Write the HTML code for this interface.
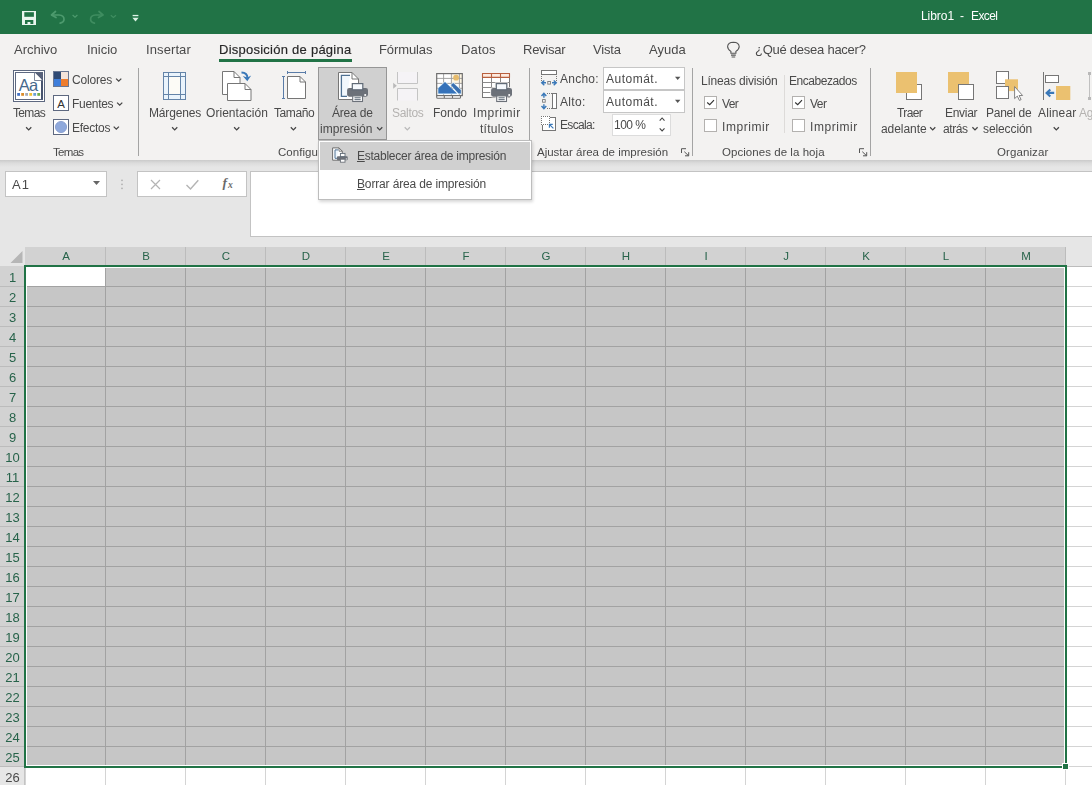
<!DOCTYPE html>
<html lang="es"><head><meta charset="utf-8"><title>Libro1 - Excel</title>
<style>
html,body{margin:0;padding:0;}
body{width:1092px;height:785px;overflow:hidden;position:relative;background:#fff;font-family:"Liberation Sans",sans-serif;}
.a{position:absolute;}
.t{position:absolute;line-height:1;white-space:pre;will-change:transform;}
#titlebar{left:0;top:0;width:1092px;height:34px;background:#217346;}
#ribbon{left:0;top:34px;width:1092px;height:126px;background:#f3f2f1;}
#fbar{left:0;top:160px;width:1092px;height:87px;background:#e6e6e6;}
#fshadow{left:0;top:160px;width:1092px;height:7px;background:linear-gradient(#cacaca,#dcdcdc 45%,#e6e6e6);}
.sep{position:absolute;width:1px;background:#a4a4a4;top:68px;height:88px;}
.box{position:absolute;background:#fff;border:1px solid #c6c6c6;box-sizing:border-box;}
.cb{position:absolute;width:13px;height:13px;background:#fff;border:1px solid #b3b1af;box-sizing:border-box;}
#tabline{left:219px;top:59px;width:133px;height:3px;background:#217346;}
#areabtn{left:318px;top:67px;width:69px;height:73px;background:#d0d0d0;border:1px solid #969696;box-sizing:border-box;}
#menu{left:318px;top:140px;width:214px;height:60px;background:#fff;border:1px solid #bdbdbd;box-sizing:border-box;box-shadow:1px 2px 3px rgba(0,0,0,.16);}
#menuhi{left:320px;top:142px;width:210px;height:28px;background:#d0d0d0;}
u{text-decoration:underline;text-underline-offset:1px;}
</style></head>
<body>
<div class="a" id="titlebar"></div>
<div class="a" id="ribbon"></div>
<div class="a" id="fbar"></div>
<div class="a" id="fshadow"></div>
<div class="a" id="tabline"></div>
<div class="sep" style="left:138px"></div>
<div class="sep" style="left:529px"></div>
<div class="sep" style="left:692px"></div>
<div class="sep" style="left:870px"></div>
<div class="sep" style="left:784px;top:75px;height:58px;background:#dddbd9"></div>
<div class="a" id="areabtn"></div>
<div class="box" style="left:603px;top:67px;width:82px;height:23px"></div>
<div class="box" style="left:603px;top:90px;width:82px;height:23px"></div>
<div class="box" style="left:612px;top:114px;width:59px;height:22px;border-color:#dcdcdc"></div>
<div class="cb" style="left:704px;top:96px"></div>
<div class="cb" style="left:704px;top:119px"></div>
<div class="cb" style="left:792px;top:96px"></div>
<div class="cb" style="left:792px;top:119px"></div>
<div class="box" style="left:5px;top:171px;width:102px;height:26px;border-color:#c3c3c3"></div>
<div class="box" style="left:137px;top:171px;width:110px;height:26px;border-color:#c3c3c3"></div>
<div class="box" style="left:250px;top:171px;width:850px;height:66px;border-color:#c3c3c3"></div>

<svg class="a" style="left:0;top:0" width="1092" height="785" viewBox="0 0 1092 785" shape-rendering="crispEdges"><rect x="0" y="247" width="1092" height="19" fill="#e6e6e6"/><rect x="25" y="247" width="1041" height="18" fill="#d2d2d2"/><rect x="0" y="266" width="25" height="501" fill="#d2d2d2"/><rect x="0" y="767" width="25" height="18" fill="#e6e6e6"/><path d="M22.5 251 V263 H10.5 Z" fill="#b6b6b6" shape-rendering="geometricPrecision"/><rect x="105" y="247" width="1" height="18" fill="#bcbcbc"/><rect x="185" y="247" width="1" height="18" fill="#bcbcbc"/><rect x="265" y="247" width="1" height="18" fill="#bcbcbc"/><rect x="345" y="247" width="1" height="18" fill="#bcbcbc"/><rect x="425" y="247" width="1" height="18" fill="#bcbcbc"/><rect x="505" y="247" width="1" height="18" fill="#bcbcbc"/><rect x="585" y="247" width="1" height="18" fill="#bcbcbc"/><rect x="665" y="247" width="1" height="18" fill="#bcbcbc"/><rect x="745" y="247" width="1" height="18" fill="#bcbcbc"/><rect x="825" y="247" width="1" height="18" fill="#bcbcbc"/><rect x="905" y="247" width="1" height="18" fill="#bcbcbc"/><rect x="985" y="247" width="1" height="18" fill="#bcbcbc"/><rect x="1065" y="247" width="1" height="18" fill="#bcbcbc"/><rect x="1066" y="266" width="26" height="1" fill="#bcbcbc"/><rect x="0" y="286" width="24" height="1" fill="#bcbcbc"/><rect x="0" y="306" width="24" height="1" fill="#bcbcbc"/><rect x="0" y="326" width="24" height="1" fill="#bcbcbc"/><rect x="0" y="346" width="24" height="1" fill="#bcbcbc"/><rect x="0" y="366" width="24" height="1" fill="#bcbcbc"/><rect x="0" y="386" width="24" height="1" fill="#bcbcbc"/><rect x="0" y="406" width="24" height="1" fill="#bcbcbc"/><rect x="0" y="426" width="24" height="1" fill="#bcbcbc"/><rect x="0" y="446" width="24" height="1" fill="#bcbcbc"/><rect x="0" y="466" width="24" height="1" fill="#bcbcbc"/><rect x="0" y="486" width="24" height="1" fill="#bcbcbc"/><rect x="0" y="506" width="24" height="1" fill="#bcbcbc"/><rect x="0" y="526" width="24" height="1" fill="#bcbcbc"/><rect x="0" y="546" width="24" height="1" fill="#bcbcbc"/><rect x="0" y="566" width="24" height="1" fill="#bcbcbc"/><rect x="0" y="586" width="24" height="1" fill="#bcbcbc"/><rect x="0" y="606" width="24" height="1" fill="#bcbcbc"/><rect x="0" y="626" width="24" height="1" fill="#bcbcbc"/><rect x="0" y="646" width="24" height="1" fill="#bcbcbc"/><rect x="0" y="666" width="24" height="1" fill="#bcbcbc"/><rect x="0" y="686" width="24" height="1" fill="#bcbcbc"/><rect x="0" y="706" width="24" height="1" fill="#bcbcbc"/><rect x="0" y="726" width="24" height="1" fill="#bcbcbc"/><rect x="0" y="746" width="24" height="1" fill="#bcbcbc"/><rect x="0" y="766" width="24" height="1" fill="#bcbcbc"/><rect x="0" y="766" width="25" height="1" fill="#bcbcbc"/><rect x="24" y="767" width="1" height="18" fill="#c4c4c4"/><rect x="1067" y="286" width="25" height="1" fill="#d4d4d4"/><rect x="1067" y="306" width="25" height="1" fill="#d4d4d4"/><rect x="1067" y="326" width="25" height="1" fill="#d4d4d4"/><rect x="1067" y="346" width="25" height="1" fill="#d4d4d4"/><rect x="1067" y="366" width="25" height="1" fill="#d4d4d4"/><rect x="1067" y="386" width="25" height="1" fill="#d4d4d4"/><rect x="1067" y="406" width="25" height="1" fill="#d4d4d4"/><rect x="1067" y="426" width="25" height="1" fill="#d4d4d4"/><rect x="1067" y="446" width="25" height="1" fill="#d4d4d4"/><rect x="1067" y="466" width="25" height="1" fill="#d4d4d4"/><rect x="1067" y="486" width="25" height="1" fill="#d4d4d4"/><rect x="1067" y="506" width="25" height="1" fill="#d4d4d4"/><rect x="1067" y="526" width="25" height="1" fill="#d4d4d4"/><rect x="1067" y="546" width="25" height="1" fill="#d4d4d4"/><rect x="1067" y="566" width="25" height="1" fill="#d4d4d4"/><rect x="1067" y="586" width="25" height="1" fill="#d4d4d4"/><rect x="1067" y="606" width="25" height="1" fill="#d4d4d4"/><rect x="1067" y="626" width="25" height="1" fill="#d4d4d4"/><rect x="1067" y="646" width="25" height="1" fill="#d4d4d4"/><rect x="1067" y="666" width="25" height="1" fill="#d4d4d4"/><rect x="1067" y="686" width="25" height="1" fill="#d4d4d4"/><rect x="1067" y="706" width="25" height="1" fill="#d4d4d4"/><rect x="1067" y="726" width="25" height="1" fill="#d4d4d4"/><rect x="1067" y="746" width="25" height="1" fill="#d4d4d4"/><rect x="1067" y="766" width="25" height="1" fill="#d4d4d4"/><rect x="25" y="768" width="1" height="17" fill="#d4d4d4"/><rect x="105" y="768" width="1" height="17" fill="#d4d4d4"/><rect x="185" y="768" width="1" height="17" fill="#d4d4d4"/><rect x="265" y="768" width="1" height="17" fill="#d4d4d4"/><rect x="345" y="768" width="1" height="17" fill="#d4d4d4"/><rect x="425" y="768" width="1" height="17" fill="#d4d4d4"/><rect x="505" y="768" width="1" height="17" fill="#d4d4d4"/><rect x="585" y="768" width="1" height="17" fill="#d4d4d4"/><rect x="665" y="768" width="1" height="17" fill="#d4d4d4"/><rect x="745" y="768" width="1" height="17" fill="#d4d4d4"/><rect x="825" y="768" width="1" height="17" fill="#d4d4d4"/><rect x="905" y="768" width="1" height="17" fill="#d4d4d4"/><rect x="985" y="768" width="1" height="17" fill="#d4d4d4"/><rect x="1065" y="768" width="1" height="17" fill="#d4d4d4"/><rect x="27" y="268" width="1037" height="497" fill="#c6c6c6"/><rect x="27" y="268" width="78" height="18" fill="#ffffff"/><rect x="105" y="268" width="1" height="497" fill="#a2a2a2"/><rect x="185" y="268" width="1" height="497" fill="#a2a2a2"/><rect x="265" y="268" width="1" height="497" fill="#a2a2a2"/><rect x="345" y="268" width="1" height="497" fill="#a2a2a2"/><rect x="425" y="268" width="1" height="497" fill="#a2a2a2"/><rect x="505" y="268" width="1" height="497" fill="#a2a2a2"/><rect x="585" y="268" width="1" height="497" fill="#a2a2a2"/><rect x="665" y="268" width="1" height="497" fill="#a2a2a2"/><rect x="745" y="268" width="1" height="497" fill="#a2a2a2"/><rect x="825" y="268" width="1" height="497" fill="#a2a2a2"/><rect x="905" y="268" width="1" height="497" fill="#a2a2a2"/><rect x="985" y="268" width="1" height="497" fill="#a2a2a2"/><rect x="27" y="286" width="1037" height="1" fill="#a2a2a2"/><rect x="27" y="306" width="1037" height="1" fill="#a2a2a2"/><rect x="27" y="326" width="1037" height="1" fill="#a2a2a2"/><rect x="27" y="346" width="1037" height="1" fill="#a2a2a2"/><rect x="27" y="366" width="1037" height="1" fill="#a2a2a2"/><rect x="27" y="386" width="1037" height="1" fill="#a2a2a2"/><rect x="27" y="406" width="1037" height="1" fill="#a2a2a2"/><rect x="27" y="426" width="1037" height="1" fill="#a2a2a2"/><rect x="27" y="446" width="1037" height="1" fill="#a2a2a2"/><rect x="27" y="466" width="1037" height="1" fill="#a2a2a2"/><rect x="27" y="486" width="1037" height="1" fill="#a2a2a2"/><rect x="27" y="506" width="1037" height="1" fill="#a2a2a2"/><rect x="27" y="526" width="1037" height="1" fill="#a2a2a2"/><rect x="27" y="546" width="1037" height="1" fill="#a2a2a2"/><rect x="27" y="566" width="1037" height="1" fill="#a2a2a2"/><rect x="27" y="586" width="1037" height="1" fill="#a2a2a2"/><rect x="27" y="606" width="1037" height="1" fill="#a2a2a2"/><rect x="27" y="626" width="1037" height="1" fill="#a2a2a2"/><rect x="27" y="646" width="1037" height="1" fill="#a2a2a2"/><rect x="27" y="666" width="1037" height="1" fill="#a2a2a2"/><rect x="27" y="686" width="1037" height="1" fill="#a2a2a2"/><rect x="27" y="706" width="1037" height="1" fill="#a2a2a2"/><rect x="27" y="726" width="1037" height="1" fill="#a2a2a2"/><rect x="27" y="746" width="1037" height="1" fill="#a2a2a2"/><rect x="26" y="267" width="1039" height="1" fill="#fff"/><rect x="26" y="267" width="1" height="499" fill="#fff"/><rect x="1064" y="267" width="1" height="499" fill="#fff"/><rect x="26" y="765" width="1039" height="1" fill="#fff"/><rect x="24" y="265" width="1043" height="2" fill="#217346"/><rect x="24" y="265" width="2" height="503" fill="#217346"/><rect x="1065" y="265" width="2" height="500" fill="#217346"/><rect x="24" y="766" width="1040" height="2" fill="#217346"/><rect x="1062" y="763" width="7" height="7" fill="#fff"/><rect x="1063" y="764" width="5" height="5" fill="#217346"/></svg>
<svg class="a" style="left:0;top:0" width="1092" height="785" viewBox="0 0 1092 785" font-family="Liberation Sans, sans-serif">
<defs>
<g id="printer">
 <path d="M2 4.9 H18.8 Q20.9 4.9 20.9 7 V11.6 Q20.9 13.7 18.8 13.7 H2.1 Q0 13.7 0 11.6 V7 Q0 4.9 2 4.9Z" fill="#6c7179"/>
 <rect x="5.2" y="0.6" width="10.5" height="6.2" fill="#f5f9fd" stroke="#5f6a76" stroke-width="1.2"/>
 <rect x="5.6" y="12.9" width="9.8" height="5.6" fill="#fff" stroke="#6c7179" stroke-width="1.1"/>
 <path d="M7.4 14.8 H13.6 M7.4 16.7 H13.6" stroke="#54616e" stroke-width="1"/>
 <circle cx="18.1" cy="12" r="1.05" fill="#fff"/>
</g>
<path id="car" d="M0 0 L2.6 2.6 L5.2 0" fill="none" stroke="#444" stroke-width="1.25"/>
</defs>
<!-- QAT -->
<g id="qat">
 <rect x="22" y="11" width="14" height="14" fill="#e9f6ee"/>
 <rect x="24.3" y="12.2" width="9.6" height="4.6" fill="#217346"/>
 <path d="M25 20 H33.3 V24 H30.4 V22 H27.5 V24 H25Z" fill="#217346"/>
 <g fill="none" stroke="#4d9a6e" stroke-width="1.7" stroke-linecap="round" stroke-linejoin="round">
  <path d="M55.5 11.5 L51.5 15 L56 17.5"/><path d="M52 15 H59 Q64 15.3 64 19.3 Q64 22.3 60.2 23.2"/>
 </g>
 <path d="M72.6 15 L75 17.2 L77.4 15" fill="none" stroke="#4d9a6e" stroke-width="1.2"/>
 <g fill="none" stroke="#3f8d60" stroke-width="1.7" stroke-linecap="round" stroke-linejoin="round">
  <path d="M99 11.5 L103 15 L98.5 17.5"/><path d="M102.5 15 H95.5 Q90.6 15.3 90.6 19.3 Q90.6 22.3 94.4 23.2"/>
 </g>
 <path d="M110.8 15.2 L113.4 17.5 L116 15.2" fill="none" stroke="#3f8d60" stroke-width="1.2"/>
 <rect x="132.6" y="14.9" width="5.8" height="1.3" fill="#dcf3e5"/>
 <path d="M132.4 17.8 H138.6 L135.5 21.4Z" fill="#dcf3e5"/>
</g>
<!-- bulb -->
<g fill="none" stroke="#555" stroke-width="1.1">
 <path d="M730.9 53.2 V51.4 Q727.6 49.2 727.6 46.5 Q727.9 42.3 733.4 42.2 Q738.9 42.3 739.2 46.5 Q739.2 49.2 735.9 51.4 V53.2 Z"/>
 <path d="M731 55.1 H735.8 M731.6 57 H735.2"/>
</g>
<!-- Temas big -->
<g id="i-temas">
 <rect x="13.5" y="70.5" width="31" height="31" fill="#fff" stroke="#5d6880"/>
 <rect x="15.5" y="72.5" width="27" height="27" fill="#fff" stroke="#5d6880"/>
 <path d="M41 73 V99.5 H43 V73Z" fill="#47536e"/>
 <path d="M34.5 72.5 H43 V81Z" fill="#566079"/>
 <path d="M34.5 72.5 V80.5 H42.5" fill="#fff" stroke="#5d6880" stroke-width="0.8"/>
 <text x="18.8" y="90.8" font-size="16.5" fill="#46688c" letter-spacing="-0.8">Aa</text>
 <rect x="17.2" y="93" width="2.8" height="2.8" fill="#4472c4"/><rect x="21.2" y="93" width="2.8" height="2.8" fill="#d98c2b"/>
 <rect x="25.2" y="93" width="2.8" height="2.8" fill="#a3abba"/><rect x="29.3" y="93" width="2.8" height="2.8" fill="#f0c232"/>
 <rect x="33.3" y="93" width="2.8" height="2.8" fill="#6a9fd2"/><rect x="37.3" y="93" width="2.8" height="2.8" fill="#70ad47"/>
</g>
<use href="#car" x="26.1" y="127.3"/>
<!-- Colores / Fuentes / Efectos -->
<rect x="53.5" y="71.5" width="15" height="15" fill="#fff" stroke="#6b7893"/>
<rect x="54" y="72" width="7" height="7" fill="#2f4a74"/><rect x="61" y="72" width="7" height="7" fill="#f4e4db"/>
<rect x="54" y="79" width="7" height="7" fill="#3e7edb"/><rect x="61" y="79" width="7" height="7" fill="#ee7d2f"/>
<use href="#car" x="116.1" y="78.6"/>
<rect x="53.5" y="95.5" width="15" height="15" fill="#fff" stroke="#5d6880"/>
<text x="57.2" y="107.7" font-size="11.5" fill="#333">A</text>
<use href="#car" x="117.1" y="102.6"/>
<rect x="53.5" y="119.5" width="15" height="15" fill="#fff" stroke="#5d6880"/>
<circle cx="61" cy="127" r="5.6" fill="#8fa9dc" stroke="#7f97cc" stroke-width="0.8"/>
<use href="#car" x="113.7" y="126.6"/>
<!-- Margenes -->
<rect x="163.5" y="72.5" width="22" height="27" fill="#eaf4fc" stroke="#6484a8"/>
<rect x="169" y="77" width="11" height="17" fill="#fcfbf6"/>
<path d="M168.5 72.5 V99.5 M180.5 72.5 V99.5 M163.5 76.5 H185.5 M163.5 94.5 H185.5" stroke="#6484a8" fill="none"/>
<use href="#car" x="172.1" y="127.3"/>
<!-- Orientacion -->
<path d="M222.5 71.5 H234 L240 77.5 V94.5 H222.5Z" fill="#fff" stroke="#767676"/>
<path d="M234 71.5 V77.5 H240" fill="none" stroke="#767676"/>
<path d="M227.5 83.5 H245 L251 89.5 V100.5 H227.5Z" fill="#fff" stroke="#767676"/>
<path d="M245 83.5 V89.5 H251" fill="none" stroke="#767676"/>
<path d="M241.5 72.6 Q247.4 72.8 247.4 78" fill="none" stroke="#3a78b8" stroke-width="2"/>
<path d="M242.8 76 L247.3 81.2 L251.2 75.6 L247.3 77.6Z" fill="#3a78b8"/>
<use href="#car" x="234.1" y="127.3"/>
<!-- Tamaño -->
<path d="M287.5 76.5 H300 L305.5 82 V98.5 H287.5Z" fill="#fff" stroke="#767676"/>
<path d="M300 76.5 V82 H305.5" fill="none" stroke="#767676"/>
<path d="M287.5 72.5 H305.5 M287.5 71 V74 M305.5 71 V74 M283.5 76.5 V98.5 M282 76.5 H285 M282 98.5 H285" stroke="#5a7ca8" fill="none"/>
<use href="#car" x="290.8" y="127.3"/>
<!-- Area de impresion -->
<path d="M338.5 72.5 H352 L358.5 79 V99.5 H338.5Z" fill="#fff" stroke="#767676"/>
<path d="M352 72.5 V79 H358.5" fill="none" stroke="#767676"/>
<path d="M350 75.3 H341.4 V96.4 H347" fill="#f1f7fc" stroke="#4f7192" stroke-width="1.3"/>
<use href="#printer" x="347.1" y="83"/>
<use href="#car" x="377.1" y="127.3"/>
<!-- Saltos (disabled) -->
<path d="M393.2 82.8 L396.8 85.8 L393.2 88.8Z" fill="#b9b9b9"/>
<path d="M397.5 72 V83.5 H417.5 V72" fill="#f5f3f6" stroke="#c4c4c4"/>
<path d="M397.5 100.5 V88.5 H417.5 V100.5" fill="#f5f3f6" stroke="#c4c4c4"/>
<path d="M404.7 127.3 L407.3 129.9 L409.9 127.3" fill="none" stroke="#b9b9b9" stroke-width="1.25"/>
<!-- Fondo -->
<rect x="436.7" y="73.6" width="25.6" height="22" fill="#fff"/>
<rect x="451.5" y="74" width="10.5" height="9.5" fill="#fdf6e3"/>
<path d="M436.7 78.4 H462.3 M436.7 83.4 H462.3 M436.7 88.3 H462.3 M443.6 73.6 V95.5 M451.4 73.6 V95.5 M459.4 73.6 V95.5" stroke="#9a9a9a" fill="none" stroke-width="0.9"/>
<circle cx="456.1" cy="77.7" r="2.9" fill="#e6bb6c"/>
<path d="M437.7 94.2 V87.8 L444.9 81.3 L458 94.2Z" fill="#dff4ff"/>
<path d="M450.2 85 L453.2 82.1 L461.4 89.9 V94.2 H458.5Z" fill="#dff4ff"/>
<path d="M438.3 93.6 V88.2 L445 82.1 L457 93.6Z" fill="#3572ba"/>
<path d="M450.9 85 L453.2 82.9 L460.8 90.1 V93.6 H458.5Z" fill="#3a70b0"/>
<path d="M436.7 95.6 V97.2 Q436.7 98.3 437.8 98.3 H459.4 Q460.5 98.3 460.5 97.2 V95.6 M444.3 95.6 V98.3 M452.5 95.6 V98.3" fill="#fff" stroke="#6e6e6e" stroke-width="1.1"/>
<rect x="436.7" y="73.6" width="25.6" height="22" fill="none" stroke="#6e6e6e" stroke-width="1.2"/>
<!-- Imprimir titulos -->
<rect x="482.5" y="73.5" width="27" height="24" fill="#fff" stroke="#767676"/>
<rect x="483" y="74" width="26" height="3.3" fill="#fdeadf"/>
<path d="M482.5 82.5 H509.5 M482.5 87.5 H509.5 M482.5 92.5 H509.5 M491.5 77.5 V97.5 M500.5 77.5 V97.5" stroke="#8a8a8a" fill="none"/>
<path d="M482 73.5 H510 M482 77.4 H510 M482.5 73.5 V77.5 M491.5 73.5 V77.5 M500.5 73.5 V77.5 M509.5 73.5 V77.5" stroke="#b8603f" fill="none" stroke-width="1.1"/>
<path d="M493.2 87.3 H494.8 V82.6 H508 V87.3 H510.2 Q513 87.3 513 90 V95 Q513 97.4 510.5 97.5 H507.5 V102.4 H495.6 V97.5 H493 Q490.2 97.4 490.2 95 V90 Q490.2 87.3 493.2 87.3Z" fill="#f3f2f1"/>
<use href="#printer" x="491.1" y="83"/>
<!-- Ancho -->
<rect x="541.5" y="70.5" width="15" height="4" fill="#fff" stroke="#767676"/>
<path d="M541.5 76 V81 M556.5 76 V81" stroke="#767676" stroke-dasharray="1 1" fill="none" shape-rendering="crispEdges"/>
<rect x="547.8" y="81.5" width="2.6" height="2.6" fill="#fff" stroke="#767676" stroke-width="0.9"/>
<path d="M544.3 80.4 L541.7 82.8 L544.3 85.2 M541.9 82.8 H546 M553.7 80.4 L556.3 82.8 L553.7 85.2 M556.1 82.8 H552" stroke="#3a78b8" stroke-width="1.4" fill="none"/>
<!-- Alto -->
<rect x="552.5" y="93.5" width="4" height="15" fill="#fff" stroke="#767676"/>
<path d="M547 93.5 H552 M547 108.5 H552" stroke="#767676" stroke-dasharray="1 1" fill="none" shape-rendering="crispEdges"/>
<rect x="542.6" y="99.6" width="2.6" height="2.6" fill="#fff" stroke="#767676" stroke-width="0.9"/>
<path d="M541.5 96 L543.9 93.4 L546.3 96 M543.9 93.6 V97.8 M541.5 106 L543.9 108.6 L546.3 106 M543.9 108.4 V104.2" stroke="#3a78b8" stroke-width="1.4" fill="none"/>
<!-- Escala -->
<rect x="542.5" y="117.5" width="13" height="13" fill="#fff" stroke="#767676"/>
<rect x="541" y="116" width="9" height="9" fill="#fff"/><path d="M541 116.5 H550 M541 124.5 H550 M541.5 116 V125 M549.5 116 V125" stroke="#767676" stroke-dasharray="1 1" fill="none" shape-rendering="crispEdges"/>
<path d="M553.4 128.4 L549.6 124.6 M549.4 127.8 V124.4 H552.8" stroke="#3a78b8" stroke-width="1.15" fill="none"/>
<!-- combos -->
<path d="M675 76.8 H680.4 L677.7 80Z" fill="#555"/>
<path d="M675 99.8 H680.4 L677.7 103Z" fill="#555"/>
<path d="M659.7 120.6 L662.1 118 L664.5 120.6 M659.7 128.3 L662.1 130.9 L664.5 128.3" fill="none" stroke="#444" stroke-width="1.1"/>
<!-- launchers -->
<g id="launch" fill="none" stroke="#555" stroke-width="1">
<path d="M681.5 153 V148.7 H686 M684.3 151.7 L688.5 155.7 M688.7 152.2 V155.8 H685"/>
</g>
<use href="#launch" x="178"/>
<!-- checks -->
<path d="M707.2 102.5 L709.7 104.7 L714 100.1" fill="none" stroke="#333" stroke-width="1.15"/>
<path d="M795.2 102.5 L797.7 104.7 L802 100.1" fill="none" stroke="#333" stroke-width="1.15"/>
<!-- Traer adelante -->
<rect x="906.5" y="84.5" width="15" height="15" fill="#fff" stroke="#767676"/>
<rect x="896" y="72" width="21" height="21" fill="#ebc170"/>
<use href="#car" x="930.1" y="127.3"/>
<!-- Enviar atras -->
<rect x="948" y="72" width="21" height="21" fill="#ebc170"/>
<rect x="958.5" y="84.5" width="15" height="15" fill="#fff" stroke="#767676"/>
<use href="#car" x="972.4" y="127.3"/>
<!-- Panel seleccion -->
<rect x="996.5" y="71.5" width="12" height="12" fill="#fff" stroke="#767676"/>
<rect x="1005" y="79.3" width="13" height="11.8" fill="#ebc170"/>
<rect x="996.5" y="86.5" width="12" height="12" fill="#fff" stroke="#767676"/>
<path d="M1014.6 86.6 V98.6 L1017.3 96.1 L1019.4 100.4 L1021.1 99.6 L1019.1 95.5 H1022.6Z" fill="#fff" stroke="#767676" stroke-width="0.9"/>
<!-- Alinear -->
<path d="M1043.5 72 V100" stroke="#767676" fill="none"/>
<rect x="1045.5" y="75.5" width="13" height="7" fill="#fff" stroke="#767676"/>
<rect x="1056" y="86" width="14.3" height="14" fill="#ebc170"/>
<path d="M1050.3 89.4 L1046.6 92.9 L1050.3 96.4 M1047 92.9 H1054.2" stroke="#3a78b8" stroke-width="2.1" fill="none"/>
<use href="#car" x="1053.7" y="127.3"/>
<!-- Agrupar (cut) -->
<path d="M1089.5 75 V97" stroke="#c0c0c0" fill="none"/><rect x="1088" y="72" width="3" height="3" fill="#b9b9b9"/><rect x="1088" y="97" width="3" height="3" fill="#b9b9b9"/>
<!-- formula bar -->
<path d="M93 181 H100 L96.5 185Z" fill="#666"/>
<circle cx="122" cy="180.3" r="0.9" fill="#b0b0b0"/><circle cx="122" cy="184.3" r="0.9" fill="#b0b0b0"/><circle cx="122" cy="188.3" r="0.9" fill="#b0b0b0"/>
<path d="M151 180 L160 189 M160 180 L151 189" stroke="#b4b4b4" stroke-width="1.2" fill="none"/>
<path d="M186.5 185 L190.5 189 L198.3 180.2" stroke="#b4b4b4" stroke-width="1.4" fill="none"/>
<text x="222.6" y="187.2" font-size="13.5" font-style="italic" font-weight="bold" font-family="Liberation Serif, serif" fill="#6a6a6a">f</text>
<text x="228" y="188.4" font-size="9.5" font-style="italic" font-weight="bold" font-family="Liberation Serif, serif" fill="#6a6a6a">x</text>
</svg>

<div class="t" style="left:920.8px;top:9.8px;font-size:12px;letter-spacing:-0.05px;color:#ffffff;">Libro1</div>
<div class="t" style="left:960.1px;top:9.8px;font-size:12px;letter-spacing:1.2px;color:#ffffff;">-</div>
<div class="t" style="left:970.9px;top:9.8px;font-size:12px;letter-spacing:-0.6px;color:#ffffff;">Excel</div>
<div class="t" style="left:13.6px;top:42.8px;font-size:13px;letter-spacing:0.0px;color:#4a4a4a;">Archivo</div>
<div class="t" style="left:86.6px;top:42.8px;font-size:13px;letter-spacing:0.0px;color:#4a4a4a;">Inicio</div>
<div class="t" style="left:145.6px;top:42.8px;font-size:13px;letter-spacing:0.1px;color:#4a4a4a;">Insertar</div>
<div class="t" style="left:219.3px;top:42.8px;font-size:13px;letter-spacing:0.25px;color:#262626;-webkit-text-stroke:0.15px #262626;">Disposición de página</div>
<div class="t" style="left:378.5px;top:42.8px;font-size:13px;letter-spacing:-0.1px;color:#4a4a4a;">Fórmulas</div>
<div class="t" style="left:460.6px;top:42.8px;font-size:13px;letter-spacing:0.15px;color:#4a4a4a;">Datos</div>
<div class="t" style="left:522.6px;top:42.8px;font-size:13px;letter-spacing:-0.25px;color:#4a4a4a;">Revisar</div>
<div class="t" style="left:593.1px;top:42.8px;font-size:13px;letter-spacing:-0.15px;color:#4a4a4a;">Vista</div>
<div class="t" style="left:649.4px;top:42.8px;font-size:13px;letter-spacing:0.05px;color:#4a4a4a;">Ayuda</div>
<div class="t" style="left:754.9px;top:42.8px;font-size:13px;letter-spacing:-0.25px;color:#4a4a4a;">¿Qué desea hacer?</div>
<div class="t" style="left:12.6px;top:106.8px;font-size:12px;letter-spacing:-0.65px;color:#4a4a4a;">Temas</div>
<div class="t" style="left:72.0px;top:73.8px;font-size:12px;letter-spacing:-0.2px;color:#4a4a4a;">Colores</div>
<div class="t" style="left:71.9px;top:97.8px;font-size:12px;letter-spacing:-0.3px;color:#4a4a4a;">Fuentes</div>
<div class="t" style="left:71.9px;top:121.8px;font-size:12px;letter-spacing:-0.25px;color:#4a4a4a;">Efectos</div>
<div class="t" style="left:148.7px;top:106.8px;font-size:12px;letter-spacing:-0.15px;color:#4a4a4a;">Márgenes</div>
<div class="t" style="left:206.0px;top:106.8px;font-size:12px;letter-spacing:0.05px;color:#4a4a4a;">Orientación</div>
<div class="t" style="left:273.9px;top:106.8px;font-size:12px;letter-spacing:-0.4px;color:#4a4a4a;">Tamaño</div>
<div class="t" style="left:332.2px;top:106.8px;font-size:12px;letter-spacing:-0.2px;color:#4a4a4a;">Área de</div>
<div class="t" style="left:320.4px;top:122.8px;font-size:12px;letter-spacing:0.05px;color:#4a4a4a;">impresión</div>
<div class="t" style="left:391.6px;top:106.8px;font-size:12px;letter-spacing:-0.3px;color:#b4b2b0;">Saltos</div>
<div class="t" style="left:432.7px;top:106.8px;font-size:12px;letter-spacing:0.0px;color:#4a4a4a;">Fondo</div>
<div class="t" style="left:472.7px;top:106.8px;font-size:12px;letter-spacing:0.55px;color:#4a4a4a;">Imprimir</div>
<div class="t" style="left:479.7px;top:122.8px;font-size:12px;letter-spacing:0.25px;color:#4a4a4a;">títulos</div>
<div class="t" style="left:559.9px;top:72.8px;font-size:12px;letter-spacing:0.25px;color:#4a4a4a;">Ancho:</div>
<div class="t" style="left:559.9px;top:95.8px;font-size:12px;letter-spacing:0.3px;color:#4a4a4a;">Alto:</div>
<div class="t" style="left:559.8px;top:118.8px;font-size:12px;letter-spacing:-0.65px;color:#4a4a4a;">Escala:</div>
<div class="t" style="left:606.0px;top:72.8px;font-size:12px;letter-spacing:0.5px;color:#4a4a4a;">Automát.</div>
<div class="t" style="left:606.0px;top:95.8px;font-size:12px;letter-spacing:0.5px;color:#4a4a4a;">Automát.</div>
<div class="t" style="left:614.2px;top:118.8px;font-size:12px;letter-spacing:-0.5px;color:#4a4a4a;">100 %</div>
<div class="t" style="left:701.1px;top:74.8px;font-size:12px;letter-spacing:-0.2px;color:#4a4a4a;">Líneas división</div>
<div class="t" style="left:721.8px;top:97.8px;font-size:12px;letter-spacing:-0.6px;color:#4a4a4a;">Ver</div>
<div class="t" style="left:721.6px;top:120.8px;font-size:12px;letter-spacing:0.55px;color:#4a4a4a;">Imprimir</div>
<div class="t" style="left:788.9px;top:74.8px;font-size:12px;letter-spacing:-0.45px;color:#4a4a4a;">Encabezados</div>
<div class="t" style="left:809.9px;top:97.8px;font-size:12px;letter-spacing:-0.55px;color:#4a4a4a;">Ver</div>
<div class="t" style="left:809.7px;top:120.8px;font-size:12px;letter-spacing:0.55px;color:#4a4a4a;">Imprimir</div>
<div class="t" style="left:896.6px;top:106.8px;font-size:12px;letter-spacing:-0.6px;color:#4a4a4a;">Traer</div>
<div class="t" style="left:880.7px;top:122.8px;font-size:12px;letter-spacing:-0.05px;color:#4a4a4a;">adelante</div>
<div class="t" style="left:944.8px;top:106.8px;font-size:12px;letter-spacing:-0.3px;color:#4a4a4a;">Enviar</div>
<div class="t" style="left:942.8px;top:122.8px;font-size:12px;letter-spacing:-0.4px;color:#4a4a4a;">atrás</div>
<div class="t" style="left:985.8px;top:106.8px;font-size:12px;letter-spacing:-0.25px;color:#4a4a4a;">Panel de</div>
<div class="t" style="left:983.4px;top:122.8px;font-size:12px;letter-spacing:-0.1px;color:#4a4a4a;">selección</div>
<div class="t" style="left:1037.6px;top:106.8px;font-size:12px;letter-spacing:0.15px;color:#4a4a4a;">Alinear</div>
<div class="t" style="left:1079.4px;top:106.8px;font-size:12px;letter-spacing:-0.25px;color:#b4b2b0;">Agrupar</div>
<div class="t" style="left:52.7px;top:146.9px;font-size:11.5px;letter-spacing:-0.7px;color:#4a4a4a;">Temas</div>
<div class="t" style="left:278.1px;top:146.9px;font-size:11.5px;letter-spacing:0.05px;color:#4a4a4a;">Configurar página</div>
<div class="t" style="left:536.8px;top:146.9px;font-size:11.5px;letter-spacing:0.0px;color:#4a4a4a;">Ajustar área de impresión</div>
<div class="t" style="left:722.3px;top:146.9px;font-size:11.5px;letter-spacing:0.05px;color:#4a4a4a;">Opciones de la hoja</div>
<div class="t" style="left:997.0px;top:146.9px;font-size:11.5px;letter-spacing:0.1px;color:#4a4a4a;">Organizar</div>
<div class="t" style="left:11.7px;top:178.0px;font-size:13px;letter-spacing:1.0px;color:#4a4a4a;">A1</div>
<div class="t" style="top:250.9px;font-size:11.5px;color:#27634a;width:80px;text-align:center;left:25.6px;">A</div>
<div class="t" style="top:250.9px;font-size:11.5px;color:#27634a;width:80px;text-align:center;left:105.6px;">B</div>
<div class="t" style="top:250.9px;font-size:11.5px;color:#27634a;width:80px;text-align:center;left:185.6px;">C</div>
<div class="t" style="top:250.9px;font-size:11.5px;color:#27634a;width:80px;text-align:center;left:265.6px;">D</div>
<div class="t" style="top:250.9px;font-size:11.5px;color:#27634a;width:80px;text-align:center;left:345.6px;">E</div>
<div class="t" style="top:250.9px;font-size:11.5px;color:#27634a;width:80px;text-align:center;left:425.6px;">F</div>
<div class="t" style="top:250.9px;font-size:11.5px;color:#27634a;width:80px;text-align:center;left:505.6px;">G</div>
<div class="t" style="top:250.9px;font-size:11.5px;color:#27634a;width:80px;text-align:center;left:585.6px;">H</div>
<div class="t" style="top:250.9px;font-size:11.5px;color:#27634a;width:80px;text-align:center;left:665.6px;">I</div>
<div class="t" style="top:250.9px;font-size:11.5px;color:#27634a;width:80px;text-align:center;left:745.6px;">J</div>
<div class="t" style="top:250.9px;font-size:11.5px;color:#27634a;width:80px;text-align:center;left:825.6px;">K</div>
<div class="t" style="top:250.9px;font-size:11.5px;color:#27634a;width:80px;text-align:center;left:905.6px;">L</div>
<div class="t" style="top:250.9px;font-size:11.5px;color:#27634a;width:80px;text-align:center;left:985.6px;">M</div>
<div class="t" style="top:270.9px;font-size:13px;color:#27634a;width:25px;text-align:center;left:0px;">1</div>
<div class="t" style="top:290.9px;font-size:13px;color:#27634a;width:25px;text-align:center;left:0px;">2</div>
<div class="t" style="top:310.9px;font-size:13px;color:#27634a;width:25px;text-align:center;left:0px;">3</div>
<div class="t" style="top:330.9px;font-size:13px;color:#27634a;width:25px;text-align:center;left:0px;">4</div>
<div class="t" style="top:350.9px;font-size:13px;color:#27634a;width:25px;text-align:center;left:0px;">5</div>
<div class="t" style="top:370.9px;font-size:13px;color:#27634a;width:25px;text-align:center;left:0px;">6</div>
<div class="t" style="top:390.9px;font-size:13px;color:#27634a;width:25px;text-align:center;left:0px;">7</div>
<div class="t" style="top:410.9px;font-size:13px;color:#27634a;width:25px;text-align:center;left:0px;">8</div>
<div class="t" style="top:430.9px;font-size:13px;color:#27634a;width:25px;text-align:center;left:0px;">9</div>
<div class="t" style="top:450.9px;font-size:13px;color:#27634a;width:25px;text-align:center;left:0px;">10</div>
<div class="t" style="top:470.9px;font-size:13px;color:#27634a;width:25px;text-align:center;left:0px;">11</div>
<div class="t" style="top:490.9px;font-size:13px;color:#27634a;width:25px;text-align:center;left:0px;">12</div>
<div class="t" style="top:510.9px;font-size:13px;color:#27634a;width:25px;text-align:center;left:0px;">13</div>
<div class="t" style="top:530.9px;font-size:13px;color:#27634a;width:25px;text-align:center;left:0px;">14</div>
<div class="t" style="top:550.9px;font-size:13px;color:#27634a;width:25px;text-align:center;left:0px;">15</div>
<div class="t" style="top:570.9px;font-size:13px;color:#27634a;width:25px;text-align:center;left:0px;">16</div>
<div class="t" style="top:590.9px;font-size:13px;color:#27634a;width:25px;text-align:center;left:0px;">17</div>
<div class="t" style="top:610.9px;font-size:13px;color:#27634a;width:25px;text-align:center;left:0px;">18</div>
<div class="t" style="top:630.9px;font-size:13px;color:#27634a;width:25px;text-align:center;left:0px;">19</div>
<div class="t" style="top:650.9px;font-size:13px;color:#27634a;width:25px;text-align:center;left:0px;">20</div>
<div class="t" style="top:670.9px;font-size:13px;color:#27634a;width:25px;text-align:center;left:0px;">21</div>
<div class="t" style="top:690.9px;font-size:13px;color:#27634a;width:25px;text-align:center;left:0px;">22</div>
<div class="t" style="top:710.9px;font-size:13px;color:#27634a;width:25px;text-align:center;left:0px;">23</div>
<div class="t" style="top:730.9px;font-size:13px;color:#27634a;width:25px;text-align:center;left:0px;">24</div>
<div class="t" style="top:750.9px;font-size:13px;color:#27634a;width:25px;text-align:center;left:0px;">25</div>
<div class="t" style="top:770.9px;font-size:13px;color:#4a4a4a;width:25px;text-align:center;left:0px;">26</div>
<div class="a" id="menu"></div><div class="a" id="menuhi"></div>
<svg class="a" style="left:0;top:0" width="1092" height="785" viewBox="0 0 1092 785">
<path d="M332.6 147.9 H339 L342.3 151.2 V160.2 H332.6Z" fill="#fff" stroke="#6e6e6e" stroke-width="1"/>
<path d="M339 147.9 V151.2 H342.3" fill="none" stroke="#6e6e6e" stroke-width="0.9"/>
<path d="M338.3 149.9 H335 V158.3 H337" fill="#eef6fc" stroke="#4f7192" stroke-width="1"/>
<rect x="337" y="156.2" width="10.7" height="4" rx="0.9" fill="#6c7179"/>
<rect x="340.4" y="153.4" width="4.6" height="3.2" fill="#fff" stroke="#5f6a76" stroke-width="0.9"/>
<rect x="340.4" y="159.2" width="4.6" height="3" fill="#fff" stroke="#6c7179" stroke-width="0.9"/>
<circle cx="346.3" cy="158.9" r="0.6" fill="#fff"/>
</svg>
<div class="t" style="left:356.9px;top:149.8px;font-size:12px;letter-spacing:-0.25px;color:#4a4a4a;"><u>E</u>stablecer área de impresión</div>
<div class="t" style="left:356.9px;top:177.8px;font-size:12px;letter-spacing:-0.15px;color:#4a4a4a;"><u>B</u>orrar área de impresión</div>
</body></html>
